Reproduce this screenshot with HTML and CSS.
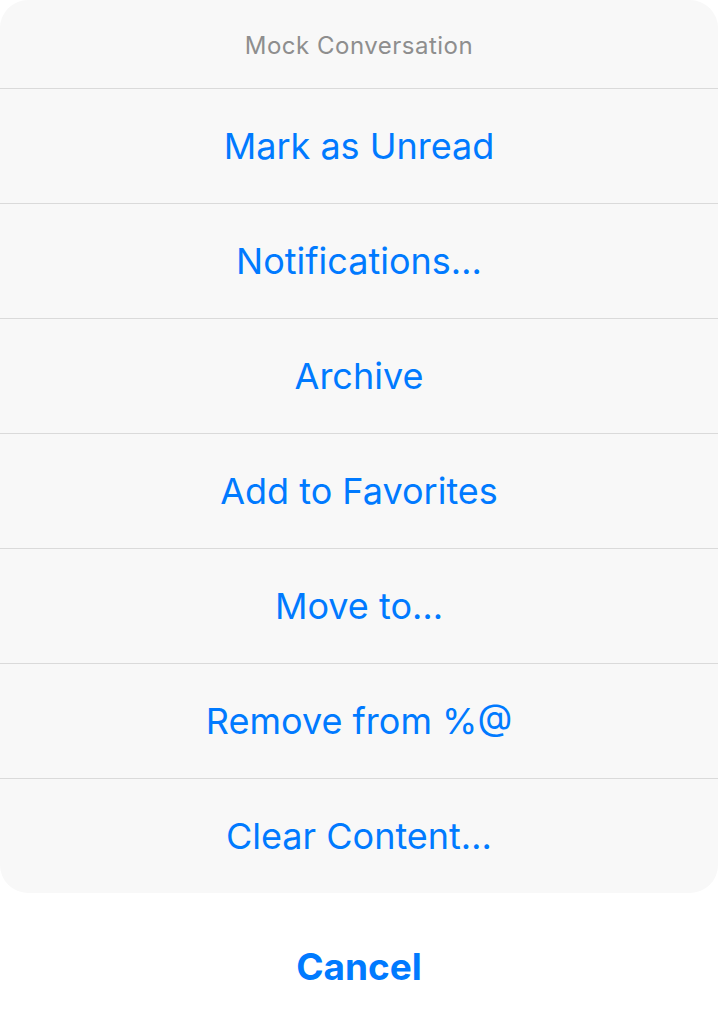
FILE: index.html
```html
<!DOCTYPE html>
<html>
<head>
<meta charset="utf-8">
<link rel="stylesheet" href="styles.css">
</head>
<body>
<div class="sheet">
  <div class="group">
    <div class="title">Mock Conversation</div>
    <div class="action">Mark as Unread</div>
    <div class="action">Notifications…</div>
    <div class="action">Archive</div>
    <div class="action">Add to Favorites</div>
    <div class="action">Move to…</div>
    <div class="action">Remove from %@</div>
    <div class="action">Clear Content…</div>
  </div>
  <div class="cancel">Cancel</div>
</div>
</body>
</html>
```

FILE: styles.css
```css
html, body {
  margin: 0;
  padding: 0;
  background: #ffffff;
}
body {
  font-family: Inter, "Noto Sans", sans-serif;
  width: 718px;
  height: 1023px;
  overflow: hidden;
}
.sheet {
  display: flex;
  flex-direction: column;
  gap: 16px;
}
.group {
  background: #f8f8f8;
  border-radius: 28px;
  overflow: hidden;
  display: flex;
  flex-direction: column;
}
.title {
  height: 88px;
  display: flex;
  align-items: center;
  justify-content: center;
  padding-top: 2px;
  box-sizing: border-box;
  font-size: 24px;
  color: #8e8e8e;
  letter-spacing: 0.5px;
}
.action {
  height: 115px;
  box-sizing: border-box;
  border-top: 1px solid #dadada;
  display: flex;
  align-items: center;
  justify-content: center;
  font-size: 36px;
  color: #007aff;
}
.cancel {
  height: 114px;
  display: flex;
  align-items: center;
  justify-content: center;
  font-size: 37px;
  font-weight: 650;
  color: #007aff;
  background: #ffffff;
  border-radius: 28px;
}
```
